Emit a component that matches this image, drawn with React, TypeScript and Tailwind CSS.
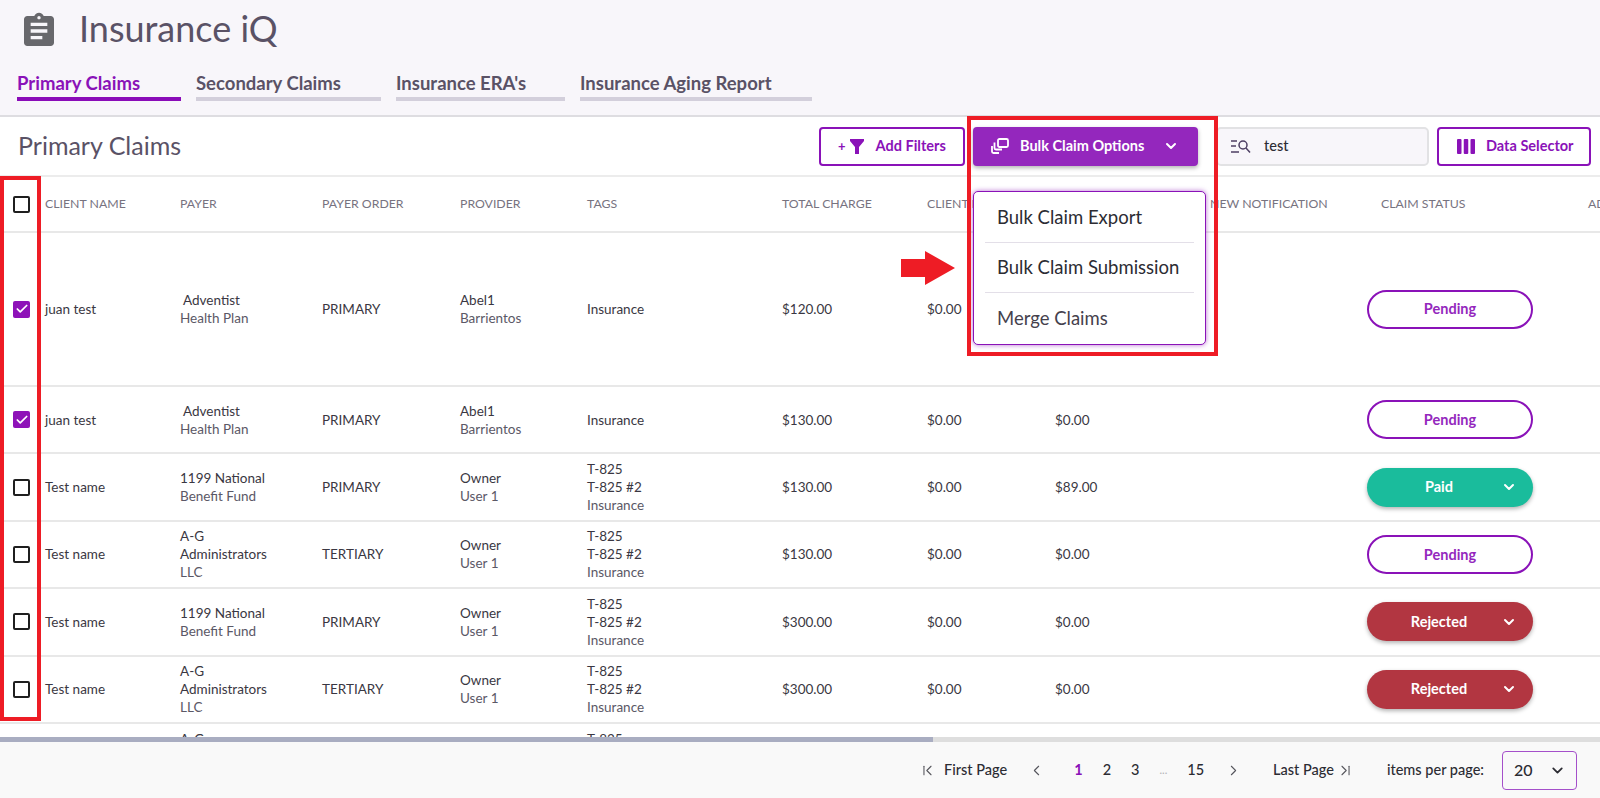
import { Check, ChevronDown, ChevronFirst, ChevronLast, ChevronLeft, ChevronRight } from "lucide-react";

const cols = "grid grid-cols-[45px_135px_142px_138px_127px_195px_145px_128px_155px_157px_221px_12px]";

const headers = ["CLIENT NAME", "PAYER", "PAYER ORDER", "PROVIDER", "TAGS", "TOTAL CHARGE", "CLIENT PAID", "INSURANCE PAID", "NEW NOTIFICATION"];

type Status = "Pending" | "Paid" | "Rejected";
type Row = {
  checked?: boolean;
  tall?: boolean;
  name: string;
  payer: string[];
  order: string;
  provider: string[];
  tags: string[];
  total: string;
  paid: string;
  ins: string;
  status?: Status;
};

const adventist = ["\u00a0Adventist", "Health Plan"];
const fund = ["1199 National", "Benefit Fund"];
const ag = ["A-G", "Administrators", "LLC"];
const owner = ["Owner", "User 1"];
const abel = ["Abel1", "Barrientos"];
const t825 = ["T-825", "T-825 #2", "Insurance"];

const rows: Row[] = [
  { checked: true, tall: true, name: "juan test", payer: adventist, order: "PRIMARY", provider: abel, tags: ["Insurance"], total: "$120.00", paid: "$0.00", ins: "$0.00", status: "Pending" },
  { checked: true, name: "juan test", payer: adventist, order: "PRIMARY", provider: abel, tags: ["Insurance"], total: "$130.00", paid: "$0.00", ins: "$0.00", status: "Pending" },
  { name: "Test name", payer: fund, order: "PRIMARY", provider: owner, tags: t825, total: "$130.00", paid: "$0.00", ins: "$89.00", status: "Paid" },
  { name: "Test name", payer: ag, order: "TERTIARY", provider: owner, tags: t825, total: "$130.00", paid: "$0.00", ins: "$0.00", status: "Pending" },
  { name: "Test name", payer: fund, order: "PRIMARY", provider: owner, tags: t825, total: "$300.00", paid: "$0.00", ins: "$0.00", status: "Rejected" },
  { name: "Test name", payer: ag, order: "TERTIARY", provider: owner, tags: t825, total: "$300.00", paid: "$0.00", ins: "$0.00", status: "Rejected" },
  { name: "", payer: ag, order: "", provider: [], tags: t825, total: "", paid: "", ins: "" },
];

const tabs = [
  { label: "Primary Claims", w: "w-[164px]", active: true },
  { label: "Secondary Claims", w: "w-[185px]" },
  { label: "Insurance ERA's", w: "w-[169px]" },
  { label: "Insurance Aging Report", w: "w-[232px]" },
];

function Box({ checked }: { checked?: boolean }) {
  if (checked) {
    return (
      <div className="w-[17px] h-[17px] rounded-[2px] bg-[#8e12b8] flex items-center justify-center">
        <Check size={14} strokeWidth={3} className="text-white" />
      </div>
    );
  }
  return <div className="w-[17px] h-[17px] rounded-[2px] border-2 border-[#1f1f1f] bg-white" />;
}

function Lines({ items }: { items: string[] }) {
  return (
    <div className="flex flex-col justify-center text-[13.500px] leading-[18px]">
      {items.map((t, i) => (
        <div key={i} className={i > 0 && i === items.length - 1 ? "text-[#5b5866]" : "text-[#3a3742]"}>
          {t}
        </div>
      ))}
    </div>
  );
}

function StatusButton({ status }: { status?: Status }) {
  if (!status) return <div />;
  if (status === "Pending") {
    return (
      <div className="w-[166px] h-[39px] rounded-full border-2 border-[#8a12b8] bg-white flex items-center justify-center text-[14.500px] font-bold text-[#9427bd]">
        Pending
      </div>
    );
  }
  const bg = status === "Paid" ? "bg-[#1abc9c]" : "bg-[#b23641]";
  return (
    <div className={`w-[166px] h-[39px] rounded-full ${bg} shadow-[0_2px_4px_rgba(0,0,0,0.3)] flex items-center pl-[10px] pr-[16px] text-[14.500px] font-bold text-white`}>
      <span className="flex-1 text-center">{status}</span>
      <ChevronDown size={16} strokeWidth={3} />
    </div>
  );
}

export default function App() {
  return (
    <div className="relative w-[1600px] h-[798px] overflow-hidden bg-white flex flex-col font-['Lato',sans-serif]">
      <div className="h-[117px] shrink-0 bg-[#f8f6fa] border-b-2 border-[#dedde1]">
        <div className="h-[60px] flex items-center pl-[19px]">
          <svg width="40" height="40" viewBox="0 0 24 24" fill="#68686c" className="mt-[2px]">
            <path d="M19 3h-4.180C14.400 1.840 13.300 1 12 1s-2.400.840-2.820 2H5c-1.100 0-2 .900-2 2v14c0 1.100.900 2 2 2h14c1.100 0 2-.900 2-2V5c0-1.100-.900-2-2-2zm-7 0c.550 0 1 .450 1 1s-.450 1-1 1-1-.450-1-1 .450-1 1-1zm2 14H7v-2h7v2zm3-4H7v-2h10v2zm0-4H7V7h10v2z" />
          </svg>
          <div className="ml-[20px] mb-[4px] text-[36px] leading-none text-[#5a5266]">Insurance iQ</div>
        </div>
        <div className="flex gap-[15px] pl-[17px] pt-[12px]">
          {tabs.map((t) => (
            <div key={t.label} className={t.w}>
              <div className={`h-[25px] text-[18.500px] leading-[22px] font-bold whitespace-nowrap ${t.active ? "text-[#8a12b8]" : "text-[#5a5266]"}`}>{t.label}</div>
              <div className={`h-[4px] ${t.active ? "bg-[#8a0cb8]" : "bg-[#d3cfdb]"}`} />
            </div>
          ))}
        </div>
      </div>

      <div className="h-[60px] shrink-0 flex items-center justify-between pl-[18px] pr-[9px] border-b-2 border-[#ececec]">
        <div className="text-[25px] text-[#5a5266]">Primary Claims</div>
        <div className="flex items-center text-[14.500px]">
          <div className="w-[146px] h-[39px] rounded-[4px] border-2 border-[#8a12b8] flex items-center pl-[17px] font-bold text-[#8a12b8]">
            <span className="text-[13px] leading-none">+</span>
            <svg width="14" height="15" viewBox="0 0 14 15" fill="#8a12b8" className="ml-[4px]">
              <path d="M0 0h14v2L9 8v7H5V8L0 2z" />
            </svg>
            <span className="ml-[12px]">Add Filters</span>
          </div>
          <div className="ml-2 w-[225px] h-[39px] rounded-[4px] bg-[#9427bd] shadow-[0_2px_4px_rgba(0,0,0,0.3)] flex items-center pl-[18px] pr-[19px] font-bold text-white">
            <svg width="18" height="16" viewBox="0 0 18 16" fill="none" stroke="white" strokeWidth="1.800">
              <rect x="7" y="1" width="10" height="8" rx="1.500" />
              <path d="M3.500 4.500V10a1.500 1.500 0 0 0 1.500 1.500h6" />
              <path d="M1 8v5.500A1.500 1.500 0 0 0 2.500 15H8" />
            </svg>
            <span className="ml-[11px] flex-1 whitespace-nowrap">Bulk Claim Options</span>
            <ChevronDown size={16} strokeWidth={3} />
          </div>
          <div className="ml-[18px] w-[213px] h-[39px] rounded-[5px] border-2 border-[#e2e2e4] bg-[#f8f6fa] flex items-center pl-[13px] font-medium text-[#2c2c33]">
            <svg width="20" height="13" viewBox="0 0 20 13" fill="none" stroke="#4d3f63" strokeWidth="1.500">
              <path d="M0 1h6M0 6h5M0 12h8" />
              <circle cx="12" cy="5" r="4" />
              <path d="M15 8l4 4.500" />
            </svg>
            <span className="ml-[13px]">test</span>
          </div>
          <div className="ml-2 w-[154px] h-[39px] rounded-[4px] border-2 border-[#8a12b8] flex items-center pl-[18px] font-bold text-[#8a12b8]">
            <svg width="18" height="15" viewBox="0 0 18 15" fill="#8a12b8">
              <rect x="0" y="0" width="4.500" height="15" rx="1" />
              <rect x="6.750" y="0" width="4.500" height="15" rx="1" />
              <rect x="13.500" y="0" width="4.500" height="15" rx="1" />
            </svg>
            <span className="ml-[11px] whitespace-nowrap">Data Selector</span>
          </div>
        </div>
      </div>

      <div className="flex-1 min-h-0 overflow-hidden">
        <div className={`${cols} h-[56px] items-center border-b-2 border-[#e8e8e8] text-[12.300px] text-[#77737f]`}>
          <div className="pl-[13px]">
            <Box />
          </div>
          {headers.map((h) => (
            <div key={h} className="whitespace-nowrap">{h}</div>
          ))}
          <div className="pl-[14px] whitespace-nowrap">CLAIM STATUS</div>
          <div>AD</div>
        </div>
        {rows.map((r, i) => (
          <div key={i} className={`${cols} ${r.tall ? "h-[154px]" : "h-[67.400px]"} items-center border-b-2 border-[#e8e8e8]`}>
            <div className="pl-[13px]">
              {r.name && <Box checked={r.checked} />}
            </div>
            <Lines items={[r.name]} />
            <Lines items={r.payer} />
            <Lines items={[r.order]} />
            <Lines items={r.provider} />
            <Lines items={r.tags} />
            <Lines items={[r.total]} />
            <Lines items={[r.paid]} />
            <Lines items={[r.ins]} />
            <div />
            <StatusButton status={r.status} />
          </div>
        ))}
      </div>

      <div className="h-[5px] shrink-0 bg-[#dedede]">
        <div className="h-full w-[933px] bg-[#a9adc1]" />
      </div>

      <div className="h-[56px] shrink-0 bg-[#f9f9f9] flex items-center justify-end pr-[23px] text-[#2c2c33]">
        <div className="flex items-center font-medium text-[14.500px]">
          <ChevronFirst size={17} strokeWidth={1.500} className="text-[#55555c]" />
          <span className="ml-[8px]">First Page</span>
          <ChevronLeft size={17} strokeWidth={1.500} className="ml-[21px] text-[#55555c]" />
          <div className="ml-[29px] flex items-center gap-[20px]">
            <span className="font-bold text-[#8a12b8]">1</span>
            <span>2</span>
            <span>3</span>
            <span className="text-[11px] text-[#b5b5b8]">...</span>
            <span>15</span>
          </div>
          <ChevronRight size={17} strokeWidth={1.500} className="ml-[21px] text-[#55555c]" />
          <span className="ml-[31px]">Last Page</span>
          <ChevronLast size={17} strokeWidth={1.500} className="ml-[3px] text-[#55555c]" />
          <span className="ml-[33px]">items per page:</span>
        </div>
        <div className="ml-[18px] w-[75px] h-[39px] rounded-[4px] border border-[#a44fca] flex items-center justify-between pl-[11px] pr-[10px] text-[16px] font-medium">
          20
          <ChevronDown size={17} strokeWidth={2.500} />
        </div>
      </div>

      {/* dropdown, over the table */}
      <div className="absolute left-[973px] top-[191px] w-[233px] h-[154px] rounded-[5px] border-[1.500px] border-[#8a12b8] bg-white shadow-[0_0_5px_rgba(138,18,184,0.6)] px-[11px] flex flex-col text-[18.500px] text-[#2c2c33]">
        <div className="h-[51px] shrink-0 flex items-center pl-[12px] pt-[2px] border-b border-[#e3dfe8] whitespace-nowrap">Bulk Claim Export</div>
        <div className="h-[50px] shrink-0 flex items-center pl-[12px] border-b border-[#e3dfe8] whitespace-nowrap">Bulk Claim Submission</div>
        <div className="flex-1 flex items-center pl-[12px] text-[#45414d]">Merge Claims</div>
      </div>

      {/* red annotations */}
      <div className="absolute left-0 top-[176px] w-[41px] h-[545px] border-4 border-[#ee1c25]" />
      <div className="absolute left-[967px] top-[116px] w-[251px] h-[240px] border-4 border-[#ee1c25]" />
      <svg className="absolute left-[901px] top-[251px]" width="54" height="34" viewBox="0 0 54 34" fill="#ee1c25">
        <path d="M0 8h24V0l30 17-30 17v-8H0z" />
      </svg>
    </div>
  );
}
